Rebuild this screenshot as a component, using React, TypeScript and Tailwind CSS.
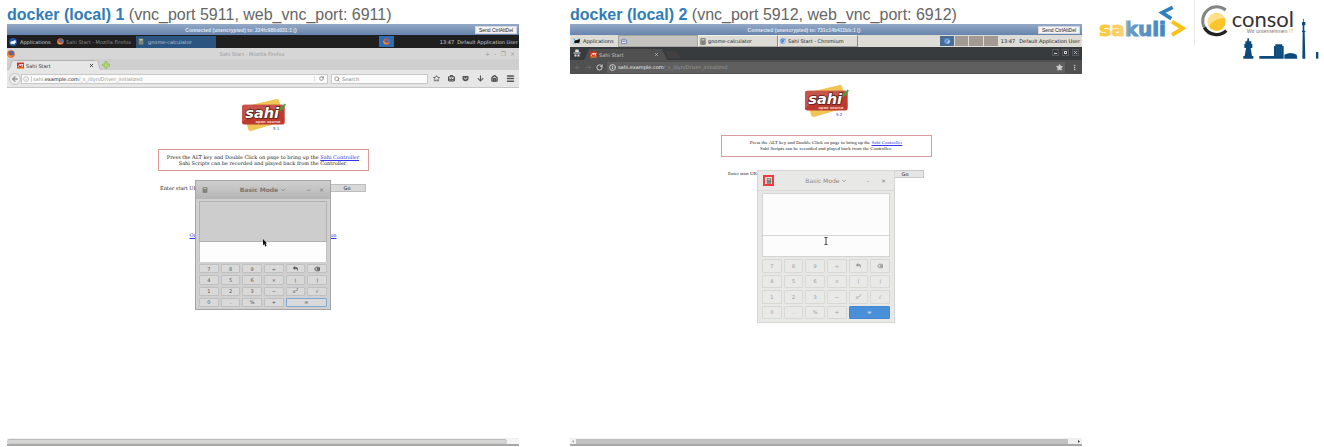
import type { ReactNode } from "react";
import {
  ArrowLeft,
  ArrowRight,
  BriefcaseBusiness,
  ChevronDown,
  Delete,
  House,
  Info,
  Menu,
  MoreVertical,
  RotateCw,
  Search,
  Star,
  X,
} from "lucide-react";
import { FaArrowDown, FaGetPocket, FaReply } from "react-icons/fa";

function Heading({ name, ports }: { name: string; ports: string }) {
  return (
    <h2 className="flex h-6 items-center whitespace-nowrap pt-1.5 font-['Liberation_Sans',sans-serif] text-[16px] leading-[18px] text-[#666]">
      <span>
        <a href="#desktop" className="font-bold text-[#2f7db8]">
          {name}
        </a>{" "}
        {ports}
      </span>
    </h2>
  );
}

function VncBar({ host }: { host: string }) {
  return (
    <div className="flex h-[11px] items-center bg-linear-to-b from-[#94a9c6] to-[#6784ad] pr-0.5 font-['Liberation_Sans',sans-serif]">
      <p className="flex-1 text-center text-[5px] leading-[6px] font-bold text-[#dfe7f2]">
        Connected (unencrypted) to: {host} ()
      </p>
      <button className="flex h-2 w-[42px] items-center justify-center border border-[#d5d9df] bg-[#f3f3f3] text-[5px] leading-[6px] whitespace-nowrap text-[#222]">
        Send CtrlAltDel
      </button>
    </div>
  );
}

function FirefoxIcon({ className }: { className: string }) {
  return (
    <svg viewBox="0 0 16 16" className={className} aria-hidden="true">
      <circle cx="8" cy="8" r="7.5" fill="#e4602b" />
      <circle cx="9" cy="6.5" r="4.8" fill="#3d73b5" />
      <path d="M1 5C2 11 7 13 12 10C11 14 3 16 1 10Z" fill="#f49b32" />
      <path d="M4 5L8 6L7 9L4 9Z" fill="#d6431f" />
    </svg>
  );
}

function ChromiumIcon({ className }: { className: string }) {
  return (
    <svg viewBox="0 0 16 16" className={className} aria-hidden="true">
      <circle cx="8" cy="8" r="7.5" fill="#5f97dc" />
      <path d="M8 8L15 5A7.5 7.5 0 0 1 9 15.5Z" fill="#a9cdf5" />
      <circle cx="8" cy="8" r="3.6" fill="#f2f6fb" />
      <circle cx="8" cy="8" r="2.6" fill="#2c65b8" />
    </svg>
  );
}

function CalculatorIcon({ className }: { className: string }) {
  return (
    <svg viewBox="0 0 14 16" className={className} aria-hidden="true">
      <rect x="1" y="0.5" width="12" height="15" rx="1" fill="#66685f" />
      <rect x="3" y="2" width="8" height="4" fill="#b9c9aa" />
      <path d="M3 8.5H11M3 11H11M3 13.5H11" stroke="#c8c8c4" strokeWidth="1.4" strokeDasharray="2 1" />
    </svg>
  );
}

function XfceIcon({ className, disc }: { className: string; disc: boolean }) {
  return (
    <svg viewBox="0 0 24 24" className={className} aria-hidden="true">
      {disc && <circle cx="12" cy="12" r="12" fill="#1d56ad" />}
      {!disc && <path d="M2 4L7 12L2 20M21 4L16 12L21 20" stroke="#2aa4dc" strokeWidth="3" fill="none" />}
      <path
        d="M4 13C6 9 11 9 14 9L15 5L17 8L20 6L20 10L22 13L18 15L17 19H14L12 17L8 19L5 18Z"
        fill={disc ? "#f2f6fb" : "#111"}
      />
    </svg>
  );
}

function SahiFavicon() {
  return (
    <svg viewBox="0 0 14 14" className="size-[7px] shrink-0" aria-hidden="true">
      <rect x="0" y="1" width="14" height="12" rx="1" fill="#c73a22" />
      <path d="M2 10L5 5H8L7 8L9 5H12L10 10" fill="none" stroke="#fff" strokeWidth="1.5" />
      <path d="M1 12H13" stroke="#eeb23c" strokeWidth="1.5" />
    </svg>
  );
}

function SahiLogo({ version }: { version: string }) {
  return (
    <svg viewBox="270 25 136 102" className="h-[34px] w-[45px]" role="img" aria-label="Sahi open source">
      <path d="M281 50L378 28Q383 27 385 32L402 88Q403 94 398 96L300 124Q294 125 292 120L276 62Q275 53 281 50Z" fill="#f0c556" />
      <rect x="273" y="45" width="129" height="60" rx="7" fill="#bd3a2e" />
      <path d="M273 98V52Q273 45 280 45H395Q402 45 402 52V60Q330 50 273 98Z" fill="#c9615a" opacity="0.7" />
      <path d="M380 52L388 61L404 43" fill="none" stroke="#36ad3b" strokeWidth="6" />
      <text
        x="283"
        y="86"
        fontSize="44"
        fontWeight="bold"
        fontStyle="italic"
        fill="#fff"
        stroke="#5d2019"
        strokeWidth="5"
        paintOrder="stroke"
        fontFamily="DejaVu Sans, sans-serif"
      >
        sahi
      </text>
      <text x="314" y="101" fontSize="11" fontWeight="bold" fill="#f3cfc8" fontFamily="DejaVu Sans, sans-serif">
        open source
      </text>
      <text x="367" y="121" fontSize="12" fill="#3c3cae" fontFamily="DejaVu Sans, sans-serif">
        {version}
      </text>
    </svg>
  );
}

function MousePointer() {
  return (
    <svg viewBox="0 0 9 18" className="absolute top-[58px] left-[67px] h-2 w-1" aria-hidden="true">
      <path d="M0 0L9 10H6L8 16L5 17L3 11L0 14Z" fill="#111" />
    </svg>
  );
}

function TextPointer() {
  return (
    <svg viewBox="0 0 10 20" className="absolute top-[66px] left-[66px] h-2 w-1" aria-hidden="true">
      <path d="M1 1H9M5 1V19M1 19H9" stroke="#444" strokeWidth="2.5" fill="none" />
    </svg>
  );
}

const keys: { name: string; face: ReactNode }[] = [
  { name: "7", face: "7" },
  { name: "8", face: "8" },
  { name: "9", face: "9" },
  { name: "divide", face: "÷" },
  { name: "undo", face: <FaReply className="size-[5px]" /> },
  { name: "backspace", face: <Delete className="size-1.5" strokeWidth={4} /> },
  { name: "4", face: "4" },
  { name: "5", face: "5" },
  { name: "6", face: "6" },
  { name: "multiply", face: "×" },
  { name: "open bracket", face: "(" },
  { name: "close bracket", face: ")" },
  { name: "1", face: "1" },
  { name: "2", face: "2" },
  { name: "3", face: "3" },
  { name: "subtract", face: "−" },
  {
    name: "square",
    face: (
      <i>
        x<sup className="text-[4px]">2</sup>
      </i>
    ),
  },
  { name: "root", face: "√" },
  { name: "0", face: "0" },
  { name: "point", face: "." },
  { name: "percent", face: "%" },
  { name: "add", face: "+" },
];

function Keypad({ grid, keyStyle, equalsStyle }: { grid: string; keyStyle: string; equalsStyle: string }) {
  return (
    <div className={`grid grid-cols-6 grid-rows-4 gap-0.5 text-[5px] leading-[6px] ${grid}`}>
      {keys.map((key) => (
        <button key={key.name} aria-label={key.name} className={`flex items-center justify-center rounded-[1px] border ${keyStyle}`}>
          {key.face}
        </button>
      ))}
      <button aria-label="equals" className={`col-span-2 flex items-center justify-center rounded-[1px] border ${equalsStyle}`}>
        =
      </button>
    </div>
  );
}

function GreyCalculator() {
  return (
    <section className="absolute top-[92px] left-1/2 w-[136px] -translate-x-1/2 border border-[#a4a4a4] bg-[#d0d0d0] px-[3px] pb-0.5 font-['DejaVu_Sans',sans-serif] text-[#555]">
      <header className="-mx-[3px] flex h-[18px] items-center bg-linear-to-b from-[#cfcfcf] to-[#b5b5b5] px-1.5">
        <CalculatorIcon className="h-1.5 w-[6px]" />
        <h3 className="flex flex-1 items-center justify-center gap-0.5 pl-3 text-[6px] leading-[8px] font-bold text-[#777]">
          Basic Mode <ChevronDown className="size-1.5" strokeWidth={3} />
        </h3>
        <span className="flex gap-2 text-[6px] leading-[8px] text-[#777]">
          <button aria-label="Minimize">−</button>
          <button aria-label="Close">×</button>
        </span>
      </header>
      <div className="mt-0.5 h-[41px] border border-[#b3b3b3] bg-[#cdcdcd]" />
      <div className="h-5 border-x border-[#c0c0c0] bg-[#fdfdfd]" />
      <Keypad
        grid="mt-0.5 h-[43px]"
        keyStyle="border-[#c0c0c0] bg-[#d9d9d9]"
        equalsStyle="border-[#82a9d5] bg-[#d9d9d9]"
      />
      <MousePointer />
    </section>
  );
}

function LightCalculator() {
  return (
    <section className="absolute top-24 left-1/2 w-[138px] -translate-x-1/2 border border-[#d6d6d3] bg-[#e8e8e6] px-1 pb-[3px] font-['DejaVu_Sans',sans-serif] text-[#999]">
      <header className="-mx-1 flex h-5 items-center border-b border-[#d9d9d6] pr-2 pl-[5px]">
        <span className="flex size-[11px] items-center justify-center border-2 border-[#f33a3f]">
          <CalculatorIcon className="h-1.5 w-[6px]" />
        </span>
        <h3 className="flex flex-1 items-center justify-center gap-0.5 pl-3 text-[6px] leading-[8px] text-[#888]">
          Basic Mode <ChevronDown className="size-1.5" strokeWidth={3} />
        </h3>
        <span className="flex gap-3 text-[6px] leading-[8px] text-[#777]">
          <button aria-label="Minimize">-</button>
          <button aria-label="Close">×</button>
        </span>
      </header>
      <div className="mt-0.5 h-[43px] border border-[#d4d4d4] bg-[#fcfcfc]" />
      <div className="h-[21px] border-x border-b border-[#d4d4d4] bg-[#fcfcfc]" />
      <Keypad
        grid="mt-0.5 h-[60px]"
        keyStyle="border-[#d8d8d5] bg-[#e9e9e7]"
        equalsStyle="border-[#4187d2] bg-[#4a90d9] text-white"
      />
      <TextPointer />
    </section>
  );
}

function SahiPage({
  id,
  version,
  font,
  form,
  go,
  children,
}: {
  id: string;
  version: string;
  font: string;
  form: string;
  go: string;
  children: ReactNode;
}) {
  return (
    <div className={`relative flex flex-1 flex-col items-center bg-white pt-[10px] text-[5px] leading-[6px] text-[#222] ${font}`}>
      <SahiLogo version={version} />
      <p className="mt-[17px] flex h-[22px] w-[211px] flex-col justify-center border border-[#dc9a9a] text-center whitespace-nowrap">
        <span>
          Press the ALT key and Double Click on page to bring up the{" "}
          <a href="#controller" className="text-[#3434e8] underline">
            Sahi Controller
          </a>
        </span>
        <span>Sahi Scripts can be recorded and played back from the Controller.</span>
      </p>
      <form className={`mt-3 flex h-[9px] items-center ${form}`} onSubmit={(event) => event.preventDefault()}>
        <label htmlFor={id}>Enter start URL</label>
        <input id={id} className="mx-1 h-2 min-w-0 flex-1 border border-[#ccc]" />
        <button className={`h-2 w-[38px] border font-['DejaVu_Sans',sans-serif] text-[5px] leading-[6px] ${go}`}>Go</button>
      </form>
      {children}
    </div>
  );
}

function FirefoxDesktop() {
  return (
    <>
      <nav className="flex h-[13px] items-center bg-[#1f1f20] pl-0.5 text-[5px] leading-[8px] whitespace-nowrap text-[#d0d0d0]">
        <button className="flex w-12 items-center gap-[3px]">
          <XfceIcon disc className="size-2" />
          Applications
        </button>
        <button className="flex w-[79px] items-center gap-0.5 text-[#8c8c8c]">
          <FirefoxIcon className="size-[7px]" />
          Sahi Start - Mozilla Firefox
        </button>
        <button className="flex h-3 w-20 items-center gap-1 bg-[#2b5580] pl-0.5 text-[#b0c4d8]">
          <CalculatorIcon className="h-[7px] w-1.5" />
          gnome-calculator
        </button>
        <span className="ml-auto flex h-[11px] w-[15px] items-center justify-center bg-[#2d6db5]">
          <FirefoxIcon className="size-[7px]" />
        </span>
        <span className="ml-[46px]">13:47</span>
        <span className="mr-px ml-[3px]">Default Application User</span>
      </nav>
      <header className="flex h-[11px] items-center bg-[#d6d6d6] text-[5px] leading-[6px] text-[#999]">
        <FirefoxIcon className="size-2" />
        <p className="flex-1 pl-1 text-center">Sahi Start - Mozilla Firefox</p>
        <span className="flex w-[34px] items-center justify-between pr-1 text-[6px]">
          <button aria-label="Shade">+</button>
          <button aria-label="Minimize">-</button>
          <button aria-label="Restore">❐</button>
          <button aria-label="Close">×</button>
        </span>
      </header>
      <div className="flex h-[11px] items-end bg-[#cfcfcf] text-[5px] leading-[6px] text-[#333]">
        <svg viewBox="0 0 8 10" className="h-[10px] w-2" aria-hidden="true">
          <path d="M0 10C5 10 2 0 8 0V10Z" fill="#e6e6e6" />
          <path d="M0 10C5 10 2 0 8 0" fill="none" stroke="#aaa" strokeWidth="0.7" />
        </svg>
        <div className="flex h-[10px] w-20 items-center gap-0.5 border-t border-[#b5b5b5] bg-[#e6e6e6] pr-px pl-0.5">
          <SahiFavicon />
          <span className="flex-1">Sahi Start</span>
          <button aria-label="Close tab">
            <X className="size-[5px]" strokeWidth={4} />
          </button>
        </div>
        <svg viewBox="0 0 8 10" className="h-[10px] w-[7px]" preserveAspectRatio="none" aria-hidden="true">
          <path d="M8 10C3 10 6 0 0 0V10Z" fill="#e6e6e6" />
          <path d="M8 10C3 10 6 0 0 0" fill="none" stroke="#aaa" strokeWidth="0.7" />
        </svg>
        <button aria-label="New tab" className="self-center">
          <svg viewBox="0 0 8 8" className="size-2">
            <path d="M3 0.5H5V3H7.5V5H5V7.5H3V5H0.5V3H3Z" fill="#b5dc74" stroke="#7fb53a" strokeWidth="0.6" />
          </svg>
        </button>
      </div>
      <div className="flex h-[18px] items-center border-b border-[#c6c6c6] bg-[#e6e6e6] pr-1 pl-0.5 text-[5px] leading-[6px] text-[#666]">
        <button aria-label="Back" className="flex size-3 items-center justify-center rounded-full border border-[#c4c4c4] bg-[#efefef]">
          <ArrowLeft className="size-2 text-[#999]" strokeWidth={4} />
        </button>
        <div className="flex h-[10px] flex-1 items-center border border-[#c8c8c8] bg-[#fbfbfb] pl-px text-[#999]">
          <Info className="size-1.5" />
          <span className="ml-0.5 flex-1 border-l border-[#ccc] pl-px">
            sahi.<span className="text-[#222]">example.com</span>/_s_/dyn/Driver_initialized
          </span>
          <button aria-label="Reload" className="flex w-[13px] justify-center border-l border-[#ddd]">
            <RotateCw className="size-[5px] text-[#666]" strokeWidth={3} />
          </button>
        </div>
        <label className="ml-[3px] flex h-[10px] w-[97px] items-center gap-0.5 border border-[#c8c8c8] bg-[#fbfbfb] pl-0.5 text-[#888]">
          <Search className="size-1.5" strokeWidth={3} />
          <input aria-label="Search" placeholder="Search" className="min-w-0 flex-1 bg-transparent placeholder:text-[#888]" />
        </label>
        <div className="ml-[5px] flex w-[82px] items-center justify-between text-[#555]">
          <Star className="size-[7px]" strokeWidth={3} />
          <BriefcaseBusiness className="size-[7px]" strokeWidth={4} />
          <FaGetPocket className="size-[7px]" />
          <FaArrowDown className="size-[7px]" />
          <House className="size-[7px]" strokeWidth={5} />
          <Menu className="size-[9px]" strokeWidth={4} />
        </div>
      </div>
      <SahiPage
        id="firefox-start-url"
        version="5.1"
        font="font-['DejaVu_Serif',serif]"
        form="w-[206px]"
        go="border-[#bdbdbd] bg-[#d8d8d8]"
      >
        <a href="#docs" className="mt-10 flex w-[147px] justify-between text-[#3434e8] underline">
          <span>On</span>
          <span>on</span>
        </a>
        <GreyCalculator />
      </SahiPage>
      <div className="h-1.5 border-t border-[#f0f0f0] bg-[#f4f4f4] pr-3">
        <div className="h-[5px] rounded-sm border border-t-[#bbb] border-r-[#ccc] border-b-[#ccc] border-l-[#ccc] bg-[#d6d7d5]" />
      </div>
    </>
  );
}

function ChromiumDesktop() {
  return (
    <>
      <nav className="flex h-3 items-center bg-[#dddcd6] text-[5px] leading-[6px] whitespace-nowrap text-[#222]">
        <button className="flex w-12 items-center gap-0.5 pl-[3px]">
          <XfceIcon disc={false} className="size-2" />
          Applications
        </button>
        <button aria-label="Notifications" className="flex h-full w-20 items-center border border-[#a5a49f] bg-[#c4c3bf] pl-0.5">
          <svg viewBox="0 0 12 12" className="size-1.5" aria-hidden="true">
            <path d="M1 4H11V11H1ZM3 4L6 1L9 4M3 7H9" fill="#f4f6fb" stroke="#5670a5" strokeWidth="1.5" />
          </svg>
        </button>
        <button className="flex h-full w-20 items-center gap-0.5 border border-[#f1f0eb] border-r-[#8b8a86] border-b-[#a9a8a3] pl-px">
          <CalculatorIcon className="h-[7px] w-1.5" />
          gnome-calculator
        </button>
        <button className="flex h-full w-20 items-center gap-0.5 border border-[#f1f0eb] border-r-[#8b8a86] border-b-[#a9a8a3] pl-px">
          <ChromiumIcon className="size-1.5" />
          Sahi Start - Chromium
        </button>
        <span className="ml-auto flex h-[10px] w-[58px] gap-px">
          <span className="flex flex-1 items-center justify-center bg-[#4a6d95]">
            <ChromiumIcon className="size-1.5" />
          </span>
          <span className="flex-1 bg-[#a39b93]" />
          <span className="flex-1 bg-[#a39b93]" />
          <span className="flex-1 bg-[#a39b93]" />
        </span>
        <span className="ml-[3px]">13:47</span>
        <span className="mr-0.5 ml-1">Default Application User</span>
      </nav>
      <header className="flex h-[13px] items-end bg-[#373b3e] pl-[3px] text-[5px] leading-[6px] text-[#c4c4c4]">
        <svg viewBox="0 0 16 16" className="mb-[3px] size-2" aria-hidden="true">
          <path d="M4 6L5 1H11L12 6ZM1 7H15V9H1ZM3 11H7V15H3ZM9 11H13V15H9Z" fill="#e0e0e0" />
        </svg>
        <svg viewBox="0 0 6 11" className="ml-[3px] h-[11px] w-1.5" aria-hidden="true">
          <path d="M0 11L5 0H6V11Z" fill="#505050" />
        </svg>
        <div className="flex h-[11px] w-[71px] items-center gap-0.5 bg-[#505050] pr-0.5">
          <SahiFavicon />
          <span className="flex-1">Sahi Start</span>
          <button aria-label="Close tab">
            <X className="size-[5px]" strokeWidth={3} />
          </button>
        </div>
        <svg viewBox="0 0 20 11" className="h-[11px] w-5" aria-hidden="true">
          <path d="M0 0H1L6 11H0Z" fill="#505050" />
          <path d="M4 2H15L19 9H7Z" fill="#423f40" />
        </svg>
        <span className="mr-[3px] mb-1 ml-auto flex gap-[3px]">
          <button aria-label="Minimize" className="flex size-[7px] items-end justify-center border border-[#55585a] pb-px">
            <span className="h-px w-[3px] bg-[#ccc]" />
          </button>
          <button aria-label="Restore" className="flex size-[7px] items-center justify-center border border-[#55585a]">
            <span className="size-[3px] border border-[#ccc]" />
          </button>
          <button aria-label="Close" className="flex size-[7px] items-center justify-center border border-[#55585a]">
            <X className="size-[5px]" strokeWidth={4} />
          </button>
        </span>
      </header>
      <div className="flex h-[14px] items-center bg-[#505050] pr-1 pl-1 text-[5px] leading-[6px] text-[#999]">
        <ArrowLeft className="size-[7px] text-[#777]" />
        <ArrowRight className="ml-1 size-[7px] text-[#777]" />
        <RotateCw className="ml-1 size-[7px] text-[#ddd]" strokeWidth={3} />
        <div className="ml-1 flex h-[11px] flex-1 items-center gap-0.5 rounded-[1px] bg-[#5f5f5f] pr-0.5 pl-0.5">
          <Info className="size-[7px] text-[#ddd]" strokeWidth={3} />
          <span className="flex-1">
            <span className="text-[#eee]">sahi.example.com</span>/_s_/dyn/Driver_initialized
          </span>
          <Star className="size-[7px] fill-[#ccc] text-[#ccc]" strokeWidth={3} />
        </div>
        <MoreVertical className="ml-1.5 size-[7px] text-[#ccc]" strokeWidth={3} />
      </div>
      <SahiPage
        id="chromium-start-url"
        version="9.2"
        font="font-['Liberation_Serif',serif]"
        form="w-[196px]"
        go="border-[#c9c9c9] bg-[#e6e6e6]"
      >
        <LightCalculator />
      </SahiPage>
      <div className="flex h-1.5 items-center bg-[#f0f0f0]">
        <svg viewBox="0 0 6 5" className="h-[5px] w-1.5" aria-hidden="true">
          <path d="M4 1L2 2.5L4 4Z" fill="#aaa" />
        </svg>
        <div className="h-[5px] flex-1 bg-[#c1c1c1]" />
        <svg viewBox="0 0 14 5" className="h-[5px] w-[14px]" aria-hidden="true">
          <path d="M10 1L12 2.5L10 4Z" fill="#444" />
        </svg>
      </div>
    </>
  );
}

function Desktop({ name, ports, host, children }: { name: string; ports: string; host: string; children: ReactNode }) {
  return (
    <section className="flex min-w-0 flex-col">
      <Heading name={name} ports={ports} />
      <VncBar host={host} />
      <div className="flex flex-1 flex-col overflow-hidden border-b-2 border-[#a8a8a8] font-['DejaVu_Sans',sans-serif]">
        {children}
      </div>
    </section>
  );
}

function SakuliLogo() {
  return (
    <svg viewBox="24 0 288 135" className="h-[45px] w-24" role="img" aria-label="sakuli">
      <defs>
        <linearGradient id="wordmark" gradientUnits="userSpaceOnUse" x1="26" y1="0" x2="232" y2="0">
          <stop offset="0" stopColor="#fbc530" />
          <stop offset="0.36" stopColor="#f9d27c" />
          <stop offset="0.44" stopColor="#6b9cc4" />
          <stop offset="1" stopColor="#3f86bf" />
        </linearGradient>
      </defs>
      <text
        x="28"
        y="107"
        fontSize="60"
        fontWeight="bold"
        fontFamily="DejaVu Sans, sans-serif"
        fill="url(#wordmark)"
        stroke="url(#wordmark)"
        strokeWidth="3"
      >
        sakuli
      </text>
      <path d="M248 22L216 38L244 56" fill="none" stroke="#2f7fbb" strokeWidth="11" />
      <path d="M246 65L278 85L246 105" fill="none" stroke="#fbc117" strokeWidth="12" />
    </svg>
  );
}

function ConsolLogo() {
  return (
    <svg viewBox="315 0 387 186" className="h-[62px] w-[129px]" role="img" aria-label="consol, Wir unternehmen IT">
      <path d="M407 30A42 42 0 0 0 343 82" fill="none" stroke="#858585" strokeWidth="9" />
      <path d="M343 82A42 42 0 0 0 409 92" fill="none" stroke="#222" strokeWidth="10" />
      <circle cx="380" cy="66" r="27" fill="#fdc52c" />
      <path d="M356 79A27 27 0 0 1 404 54Q374 54 356 79Z" fill="#fee08a" />
      <text x="425" y="80" fontSize="66" fill="#333" fontFamily="Lato, sans-serif">
        consol
      </text>
      <text x="470" y="98" fontSize="16" fill="#777" fontFamily="Liberation Sans, sans-serif">
        Wir unternehmen <tspan fill="#fbc02d">IT</tspan>
      </text>
      <g fill="#0d4a7c">
        <path d="M473 114H476L478 124H484V132H487V144H482L486 168H490V176H460V168H464L468 144H463V132H466V124H471Z" />
        <path d="M508 168H552V138H556V133H577V138H581V176H508Z" />
        <path d="M583 164Q602 154 620 164L622 176H583Z" />
        <path d="M640 56H642V66H646V76H643V92H646V96H644L646 176H637L638 96H636V92H638V76H636V66H640Z" />
        <path d="M678 156H685V176H678Z" />
      </g>
      <path d="M560 138V168M567 138V168M574 138V168" stroke="#4479a3" strokeWidth="1" />
    </svg>
  );
}

export default function App() {
  return (
    <div className="flex min-h-screen gap-4 bg-white pb-px pl-[7px]">
      <main className="grid min-w-0 flex-1 grid-cols-2 gap-[51px]">
        <Desktop name="docker (local) 1" ports="(vnc_port 5911, web_vnc_port: 6911)" host="224fc980d031:1">
          <FirefoxDesktop />
        </Desktop>
        <Desktop name="docker (local) 2" ports="(vnc_port 5912, web_vnc_port: 6912)" host="731c14b411bb:1">
          <ChromiumDesktop />
        </Desktop>
      </main>
      <aside className="flex shrink-0 items-start">
        <SakuliLogo />
        <span className="h-[45px] w-px bg-[#e8e8e8]" />
        <ConsolLogo />
      </aside>
    </div>
  );
}
